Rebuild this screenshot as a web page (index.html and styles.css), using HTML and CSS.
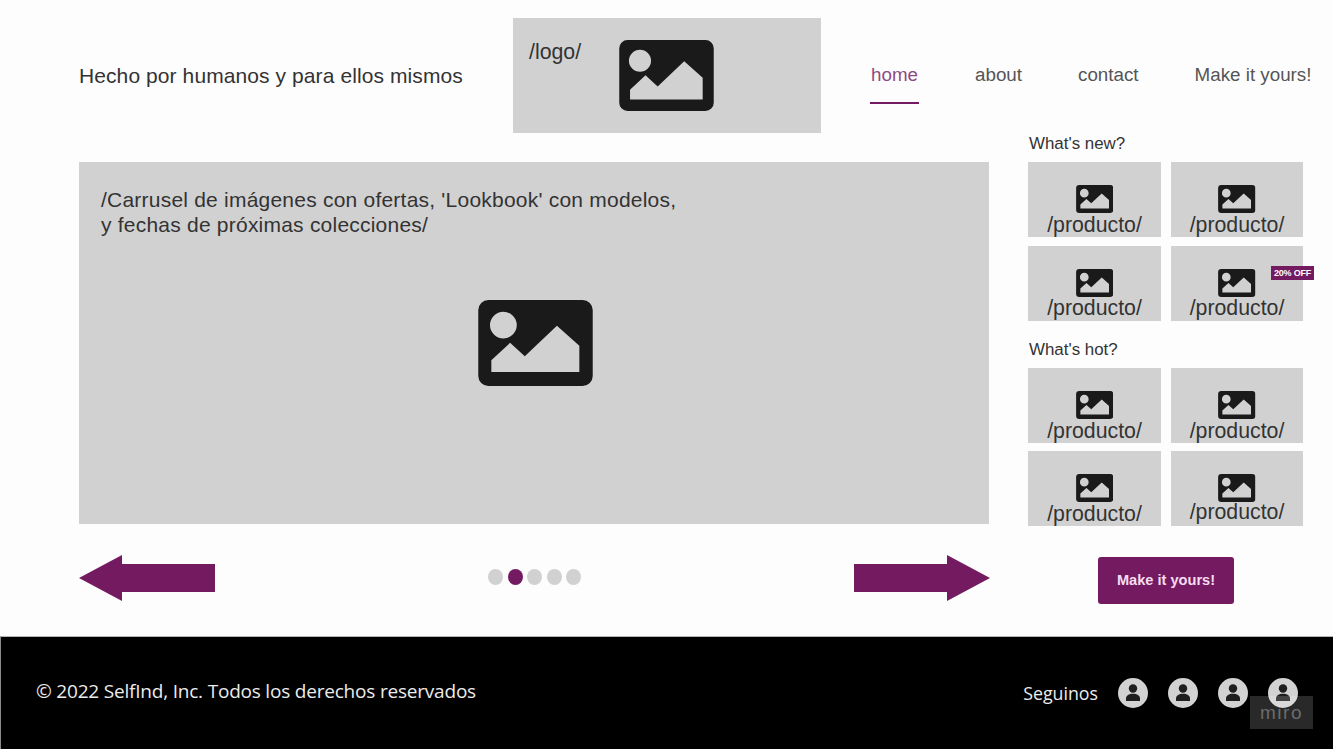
FILE: index.html
```html
<!DOCTYPE html>
<html lang="es">
<head>
<meta charset="utf-8">
<title>SelfInd</title>
<link rel="stylesheet" href="styles.css">
</head>
<body>
<svg class="defs" width="0" height="0" aria-hidden="true">
  <symbol id="img" viewBox="0 0 342 257">
    <path fill-rule="evenodd" d="M30 0H312A30 30 0 0 1 342 30V227A30 30 0 0 1 312 257H30A30 30 0 0 1 0 227V30A30 30 0 0 1 30 0ZM75 35A40 40 0 1 0 75 115A40 40 0 1 0 75 35ZM39 180V215H302V137L235 77L139 168L95 128Z"/>
  </symbol>
  <symbol id="user" viewBox="0 0 30 30">
    <circle cx="15" cy="10.5" r="4.2"/>
    <path d="M8 23V20.5C8 17.5 11 15.8 15 15.8C19 15.8 22 17.5 22 20.5V23Z"/>
  </symbol>
</svg>
<header class="top">
  <p class="tagline">Hecho por humanos y para ellos mismos</p>
  <div class="logo">
    <span class="logo-text">/logo/</span>
    <svg class="icon icon-logo"><use href="#img"/></svg>
  </div>
  <nav class="nav">
    <a class="nav-link active">home</a>
    <a class="nav-link">about</a>
    <a class="nav-link">contact</a>
    <a class="nav-link">Make it yours!</a>
  </nav>
</header>
<main class="main">
  <section class="stage">
    <div class="carousel">
      <p class="carousel-text">/Carrusel de imágenes con ofertas, 'Lookbook' con modelos,<br>y fechas de próximas colecciones/</p>
      <svg class="icon icon-large"><use href="#img"/></svg>
    </div>
    <div class="controls">
      <svg class="arrow" viewBox="0 0 136 46"><path d="M0 23L43 0V9H136V37H43V46Z"/></svg>
      <div class="dots">
        <span class="dot"></span><span class="dot on"></span><span class="dot"></span><span class="dot"></span><span class="dot"></span>
      </div>
      <svg class="arrow" viewBox="0 0 136 46"><path d="M136 23L93 0V9H0V37H93V46Z"/></svg>
    </div>
  </section>
  <aside class="side">
    <h2 class="side-title">What's new?</h2>
    <div class="products">
      <div class="card"><svg class="icon icon-small"><use href="#img"/></svg><span class="card-text">/producto/</span></div>
      <div class="card"><svg class="icon icon-small"><use href="#img"/></svg><span class="card-text">/producto/</span></div>
      <div class="card lift"><svg class="icon icon-small"><use href="#img"/></svg><span class="card-text">/producto/</span></div>
      <div class="card lift"><svg class="icon icon-small"><use href="#img"/></svg><span class="card-text">/producto/</span><span class="badge">20% OFF</span></div>
    </div>
    <h2 class="side-title second">What's hot?</h2>
    <div class="products">
      <div class="card"><svg class="icon icon-small"><use href="#img"/></svg><span class="card-text">/producto/</span></div>
      <div class="card"><svg class="icon icon-small"><use href="#img"/></svg><span class="card-text">/producto/</span></div>
      <div class="card"><svg class="icon icon-small"><use href="#img"/></svg><span class="card-text">/producto/</span></div>
      <div class="card raised"><svg class="icon icon-small"><use href="#img"/></svg><span class="card-text">/producto/</span></div>
    </div>
    <button class="cta">Make it yours!</button>
  </aside>
</main>
<footer class="footer">
  <p class="copy">© 2022 SelfInd, Inc. Todos los derechos reservados</p>
  <div class="social">
    <span class="follow">Seguinos</span>
    <span class="avatar"><svg class="avatar-icon"><use href="#user"/></svg></span>
    <span class="avatar"><svg class="avatar-icon"><use href="#user"/></svg></span>
    <span class="avatar"><svg class="avatar-icon"><use href="#user"/></svg></span>
    <span class="avatar"><svg class="avatar-icon"><use href="#user"/></svg></span>
  </div>
  <span class="miro">miro</span>
</footer>
</body>
</html>
```
FILE: styles.css
```css
* { box-sizing: border-box; }
html, body { margin: 0; padding: 0; }
body {
  width: 1333px;
  height: 749px;
  overflow: hidden;
  background: #fefdfe;
  font-family: "Liberation Sans", Arial, sans-serif;
  color: #333;
  display: flex;
  flex-direction: column;
}
.defs { position: absolute; }
.icon { display: block; fill: #1a1a1a; }
.icon-logo { width: 95px; height: 71px; margin-top: 22px; }
.icon-large { width: 115px; height: 86px; margin: 63px auto 0; position: relative; left: -10px; }
.icon-small { width: 37.5px; height: 28px; }

.top {
  height: 133px;
  padding: 18px 0 0 79px;
  display: flex;
  flex: none;
}
.tagline {
  margin: 46px 0 0;
  width: 434px;
  font-size: 21px;
  line-height: 24px;
  letter-spacing: 0.09px;
}
.logo {
  width: 308px;
  height: 115px;
  background: #d1d1d1;
  padding-left: 16px;
  display: flex;
}
.logo-text {
  width: 90px;
  margin-top: 22px;
  font-size: 21.3px;
  line-height: 24px;
}
.nav {
  margin-left: 49px;
  display: flex;
  gap: 56px;
  height: 86px;
}
.nav-link {
  font-size: 18.8px;
  line-height: 22px;
  padding-top: 46px;
  color: #555;
  height: 86px;
  text-align: center;
}
.nav-link.active {
  width: 49px;
  color: #8f4a82;
  border-bottom: 2px solid #731a61;
}

.main {
  display: flex;
  padding-left: 79px;
  flex: none;
}
.stage { width: 911px; padding-top: 29px; }
.carousel {
  width: 910px;
  height: 362px;
  background: #d1d1d1;
  padding: 25px 0 0 22px;
}
.carousel-text {
  margin: 0;
  font-size: 21px;
  line-height: 25px;
  letter-spacing: 0.22px;
}
.controls {
  margin-top: 31px;
  height: 46px;
  display: flex;
  justify-content: space-between;
  align-items: center;
}
.arrow { width: 136px; height: 46px; fill: #731a61; display: block; }
.dots { display: flex; gap: 4.5px; margin-top: -2px; }
.dot { width: 15px; height: 16px; border-radius: 50%; background: #d1d1d1; }
.dot.on { background: #731a61; }

.side { width: 275px; margin-left: 38px; }
.side-title {
  margin: 0;
  height: 29px;
  padding: 1px 0 0 1px;
  font-size: 16.9px;
  line-height: 20px;
  font-weight: 400;
}
.side-title.second { margin-top: 18px; }
.products {
  display: grid;
  grid-template-columns: 133px 132px;
  grid-auto-rows: 75px;
  column-gap: 10px;
  row-gap: 8.5px;
}
.card {
  position: relative;
  background: #d1d1d1;
  padding-top: 23px;
  display: flex;
  flex-direction: column;
  align-items: center;
}
.card-text {
  font-size: 21.3px;
  line-height: 24px;
}
.card.lift .card-text { margin-top: -1px; }
.card.raised .card-text { margin-top: -2px; }
.badge {
  position: absolute;
  top: 20px;
  left: 100px;
  width: 43px;
  height: 14px;
  background: #731a61;
  color: #fff;
  font-size: 9px;
  font-weight: 700;
  line-height: 14px;
  text-align: center;
  letter-spacing: -0.2px;
}
.cta {
  display: block;
  width: 136px;
  height: 47px;
  margin: 31px 0 0 70px;
  padding: 0 0 2px;
  border: 0;
  border-radius: 3px;
  background: #731a61;
  color: #f5ddf0;
  font-family: "Liberation Sans", Arial, sans-serif;
  font-size: 14.6px;
  font-weight: 700;
}

.footer {
  position: relative;
  margin-top: auto;
  height: 113px;
  flex: none;
  background: #000;
  border-top: 1px solid #b5b5b5;
  border-left: 1px solid #8a8a8a;
  padding: 0 35px;
  display: flex;
  align-items: center;
  justify-content: space-between;
  font-family: "Open Sans", sans-serif;
  color: #ececec;
}
.copy { margin: 0 0 4px; font-size: 19px; line-height: 24px; letter-spacing: -0.2px; }
.social { display: flex; align-items: center; gap: 20px; }
.follow { font-size: 17.8px; line-height: 24px; }
.avatar {
  width: 30px;
  height: 30px;
  border-radius: 50%;
  background: #d2d2d2;
  display: block;
}
.avatar-icon { display: block; width: 30px; height: 30px; fill: #1e1e1e; }
.miro {
  position: absolute;
  right: 20px;
  bottom: 20px;
  width: 63px;
  height: 33px;
  background: rgba(255, 255, 255, 0.16);
  color: rgba(255, 255, 255, 0.32);
  font-family: "Liberation Sans", sans-serif;
  font-size: 19px;
  line-height: 33px;
  text-align: center;
  letter-spacing: 1.5px;
}
```
